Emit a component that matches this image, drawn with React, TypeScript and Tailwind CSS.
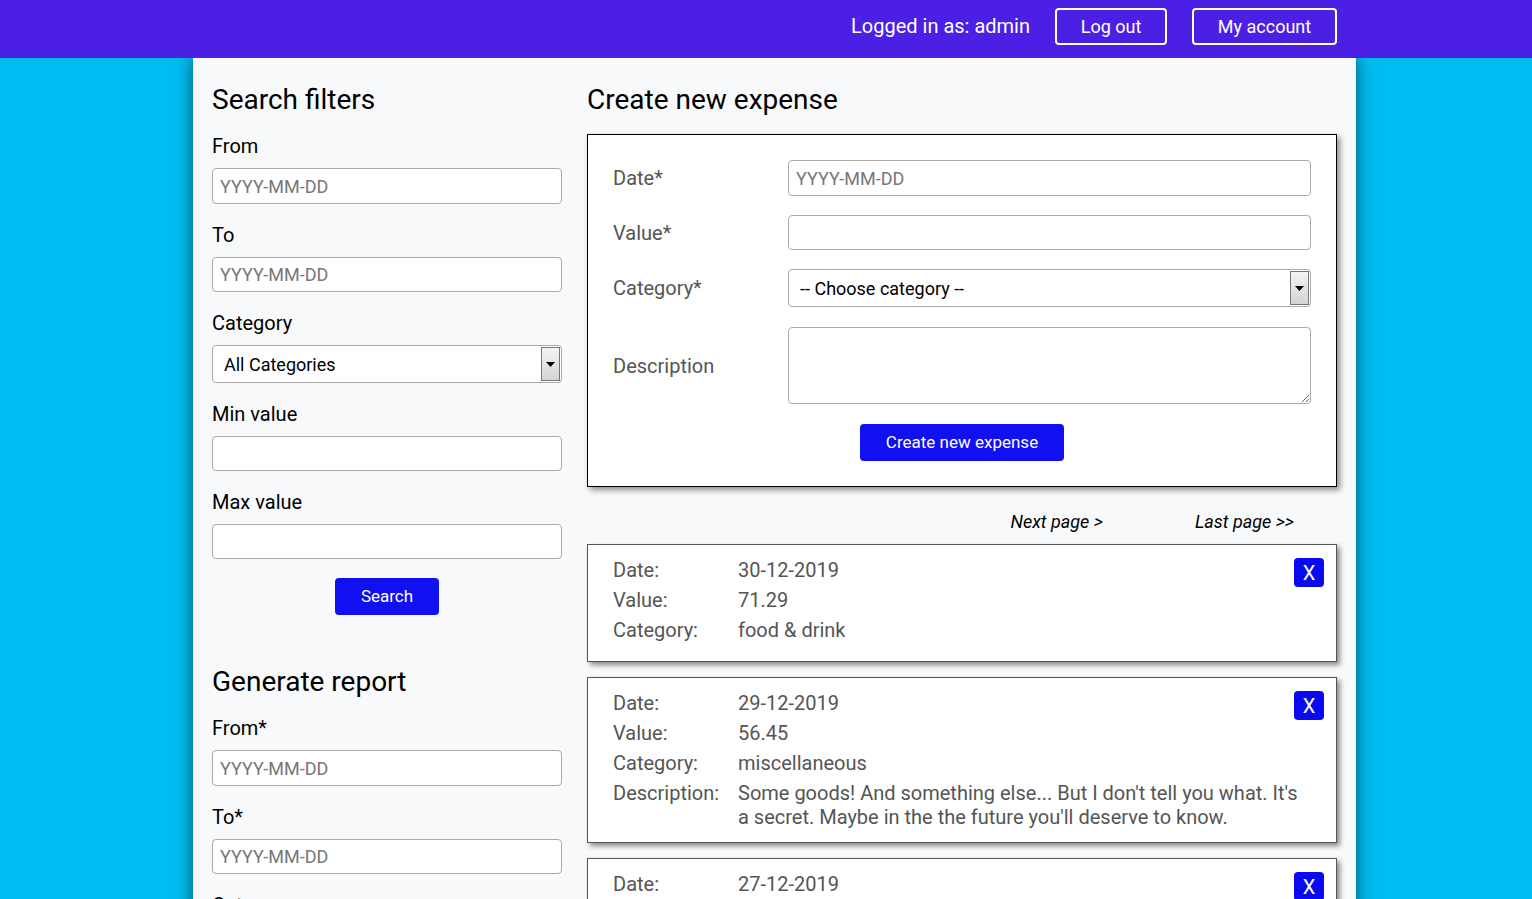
import React from "react";

const font = { fontFamily: "Roboto, 'Liberation Sans', sans-serif" };

const inputCls =
  "w-full h-[35px] bg-white border border-[#aaaaaa] rounded-[4px] px-[7px] text-[18px] text-black placeholder:text-[#777] outline-none";

const SelectBox = ({ label, h = 38 }: { label: string; h?: number }) => (
  <div
    className="relative w-full bg-white border border-[#aaaaaa] rounded-[4px] flex items-center pl-[11px] text-[18px] text-black"
    style={{ height: h }}
  >
    <span>{label}</span>
    <div className="absolute right-[1px] top-[1px] bottom-[1px] w-[19px] border border-[#777] bg-gradient-to-b from-[#f4f4f4] to-[#d4d4d4] flex items-center justify-center">
      <svg width="9" height="5" viewBox="0 0 9 5">
        <path d="M0 0 L9 0 L4.5 5 Z" fill="#000" />
      </svg>
    </div>
  </div>
);

const Field = ({
  label,
  placeholder,
  select,
  tall,
}: {
  label: string;
  placeholder?: string;
  select?: string;
  tall?: boolean;
}) => (
  <div className="mb-[17px]">
    <div className="text-[20px] leading-[28px] text-black mb-[8px]">{label}</div>
    {select ? (
      <SelectBox label={select} />
    ) : (
      <input className={inputCls + (tall ? " h-[36px]" : "")} placeholder={placeholder} />
    )}
  </div>
);

type Expense = { date: string; value: string; category: string; description?: string };

const expenses: Expense[] = [
  { date: "30-12-2019", value: "71.29", category: "food & drink" },
  {
    date: "29-12-2019",
    value: "56.45",
    category: "miscellaneous",
    description:
      "Some goods! And something else... But I don't tell you what. It's a secret. Maybe in the the future you'll deserve to know.",
  },
  { date: "27-12-2019", value: "12.00", category: "transport" },
];

const Row = ({ label, value }: { label: string; value?: string }) => (
  <div className="flex py-[3px] leading-[24px]">
    <div className="w-[125px] shrink-0">{label}</div>
    <div className="flex-1">{value}</div>
  </div>
);

const ExpenseCard = ({ e }: { e: Expense }) => (
  <div className="relative bg-white border border-[#555] shadow-[3px_3px_5px_rgba(0,0,0,0.45)] px-[25px] pt-[10px] pb-[10px] mb-[15px] text-[20px] text-[#555]">
    <button className="absolute right-[12px] top-[13px] w-[30px] h-[29px] bg-[#0a0aee] rounded-[4px] text-white text-[20px] leading-none flex items-center justify-center">
      X
    </button>
    <Row label="Date:" value={e.date} />
    <Row label="Value:" value={e.value} />
    <Row label="Category:" value={e.category} />
    {e.description ? <Row label="Description:" value={e.description} /> : <div className="h-[6px]" />}
  </div>
);

export default function App() {
  return (
    <div className="min-h-screen bg-[#00bcf0] overflow-hidden" style={font}>
      <header className="relative z-10 h-[58px] bg-[#4b1fe4] flex items-center justify-end pr-[195px] pb-[6px] gap-[25px] text-white">
        <span className="text-[20px]">Logged in as: admin</span>
        <button className="w-[112px] h-[37px] border-2 border-white rounded-[4px] text-[18px]">Log out</button>
        <button className="w-[145px] h-[37px] border-2 border-white rounded-[4px] text-[18px]">My account</button>
      </header>

      <main className="w-[1163px] ml-[193px] bg-[#f8f9fa] shadow-[0_0_16px_rgba(0,0,0,0.55)] flex gap-[25px] px-[19px] pt-[25px] min-h-[900px]">
        <aside className="w-[350px] shrink-0">
          <h2 className="text-[28px] leading-[34px] text-black mb-[15px]">Search filters</h2>
          <Field label="From" placeholder="YYYY-MM-DD" tall />
          <Field label="To" placeholder="YYYY-MM-DD" />
          <Field label="Category" select="All Categories" />
          <Field label="Min value" />
          <div className="mb-[19px]">
            <div className="text-[20px] leading-[28px] text-black mb-[8px]">Max value</div>
            <input className={inputCls} />
          </div>
          <div className="flex justify-center">
            <button className="w-[104px] h-[37px] bg-[#1010f0] rounded-[4px] text-white text-[17px]">Search</button>
          </div>

          <h2 className="text-[28px] leading-[34px] text-black mt-[50px] mb-[15px]">Generate report</h2>
          <Field label="From*" placeholder="YYYY-MM-DD" tall />
          <Field label="To*" placeholder="YYYY-MM-DD" />
          <Field label="Category" select="All Categories" />
        </aside>

        <section className="w-[750px] shrink-0">
          <h2 className="text-[28px] leading-[34px] text-black mb-[17px]">Create new expense</h2>
          <div className="bg-white border border-black shadow-[3px_3px_6px_rgba(0,0,0,0.45)] px-[25px] pt-[25px] pb-[25px] text-[20px] text-[#555]">
            <div className="flex items-center mb-[19px]">
              <div className="w-[175px]">Date*</div>
              <input className={inputCls + " flex-1 w-auto h-[36px]"} placeholder="YYYY-MM-DD" />
            </div>
            <div className="flex items-center mb-[19px]">
              <div className="w-[175px]">Value*</div>
              <input className={inputCls + " flex-1 w-auto"} />
            </div>
            <div className="flex items-center mb-[20px]">
              <div className="w-[175px]">Category*</div>
              <div className="flex-1">
                <SelectBox label="-- Choose category --" />
              </div>
            </div>
            <div className="flex items-center mb-[20px]">
              <div className="w-[175px]">Description</div>
              <textarea className="flex-1 h-[77px] bg-white border border-[#aaaaaa] rounded-[4px] outline-none" />
            </div>
            <div className="flex justify-center">
              <button className="w-[204px] h-[37px] bg-[#1010f0] rounded-[4px] text-white text-[17px]">
                Create new expense
              </button>
            </div>
          </div>

          <div className="flex justify-end text-[18px] italic text-black pt-[23px] pb-[11px] pr-[43px] gap-[92px] leading-[23px]">
            <span>Next page &gt;</span>
            <span>Last page &gt;&gt;</span>
          </div>

          {expenses.map((e) => (
            <ExpenseCard key={e.date} e={e} />
          ))}
        </section>
      </main>
    </div>
  );
}
